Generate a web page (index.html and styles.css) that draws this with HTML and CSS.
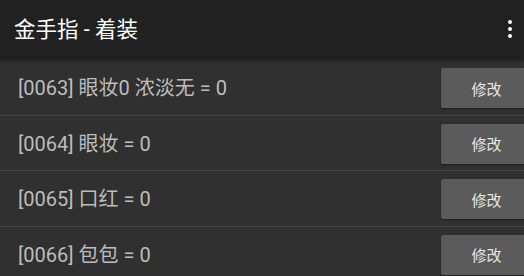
FILE: index.html
```
<!DOCTYPE html>
<html lang="zh">
<head>
<meta charset="utf-8">
<link rel="stylesheet" href="styles.css">
</head>
<body>
<div class="app">
  <header class="bar">
    <div class="title">金手指 - 着装</div>
    <div class="menu"><span class="dot"></span><span class="dot"></span><span class="dot"></span></div>
  </header>
  <ul class="list">
    <li class="row"><span class="label">[0063] 眼妆0 浓淡无 = 0</span><button class="btn">修改</button></li>
    <li class="row"><span class="label">[0064] 眼妆 = 0</span><button class="btn">修改</button></li>
    <li class="row"><span class="label">[0065] 口红 = 0</span><button class="btn">修改</button></li>
    <li class="row"><span class="label">[0066] 包包 = 0</span><button class="btn">修改</button></li>
  </ul>
</div>
</body>
</html>
```
FILE: styles.css
```
html, body {
  margin: 0;
  padding: 0;
  background: #303030;
  overflow: hidden;
}
.app {
  width: 524px;
  height: 276px;
  overflow: hidden;
  font-family: Roboto, "Noto Sans CJK SC", sans-serif;
}
.bar {
  height: 60px;
  background: #212121;
  display: flex;
  align-items: center;
  justify-content: space-between;
  padding: 0 12px 0 14px;
  box-sizing: border-box;
  position: relative;
  z-index: 1;
  box-shadow: 0 1px 3px rgba(0,0,0,0.35);
}
.title {
  color: #ffffff;
  font-size: 21.5px;
  line-height: 1;
  margin-top: -1px;
}
.menu {
  display: flex;
  flex-direction: column;
  gap: 2.6px;
  align-items: center;
  width: 4px;
  margin-top: -2px;
}
.dot {
  width: 4px;
  height: 4px;
  border-radius: 50%;
  background: #ffffff;
}
.list {
  list-style: none;
  margin: 0;
  padding: 0;
}
.row {
  height: 54.5px;
  border-bottom: 1px solid #474747;
  display: flex;
  align-items: flex-start;
  justify-content: space-between;
  background: #303030;
}
.label {
  color: #bdbdbd;
  font-size: 20px;
  line-height: 1;
  margin: 18px 0 0 18px;
  white-space: nowrap;
}
.btn {
  margin-top: 8px;
  margin-right: -8px;
  width: 91px;
  height: 40px;
  background: #5b5b5b;
  border: none;
  border-radius: 2px;
  color: #e6e6e6;
  font-family: Roboto, "Noto Sans CJK SC", sans-serif;
  font-size: 15px;
  padding: 0;
  flex-shrink: 0;
  box-shadow: 0 1px 2px rgba(0,0,0,0.4);
}
```
